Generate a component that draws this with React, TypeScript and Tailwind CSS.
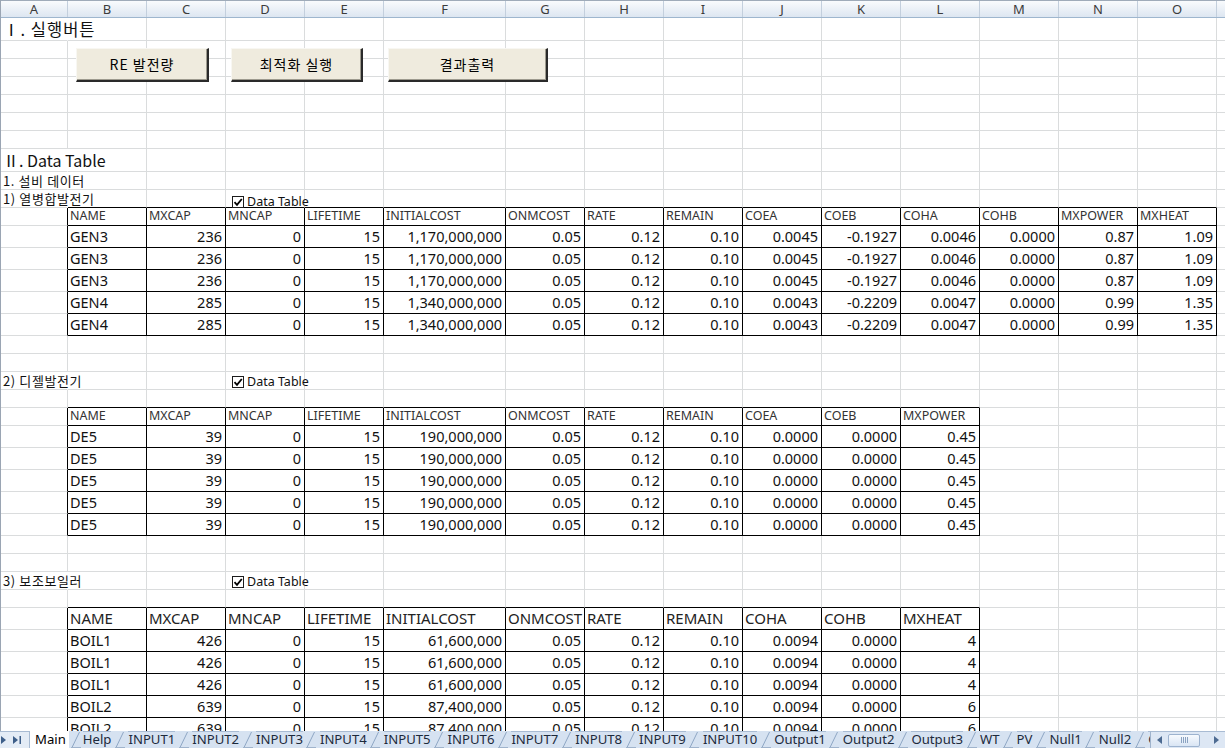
import React from 'react';

type Tbl = { r0: number; r1: number; c0: number; c1: number };
type Kind = 'blank' | 'h1' | 'sub' | 'th' | 'th3' | 'td';
type Row = { h: number; kind: Kind; text?: string; cells?: string[] };

const WIDTHS = [67, 79, 79, 79, 79, 122, 79, 79, 79, 79, 79, 79, 79, 79, 79, 40];
const WCLS: Record<number, string> = { 67: 'w-[67px]', 79: 'w-[79px]', 122: 'w-[122px]', 40: 'w-[40px]' };
const HCLS: Record<number, string> = { 18: 'h-[18px]', 22: 'h-[22px]', 23: 'h-[23px]' };
const LETTERS = 'ABCDEFGHIJKLMNOP'.split('');

const T1H = ['NAME', 'MXCAP', 'MNCAP', 'LIFETIME', 'INITIALCOST', 'ONMCOST', 'RATE', 'REMAIN', 'COEA', 'COEB', 'COHA', 'COHB', 'MXPOWER', 'MXHEAT'];
const gen3 = ['GEN3', '236', '0', '15', '1,170,000,000', '0.05', '0.12', '0.10', '0.0045', '-0.1927', '0.0046', '0.0000', '0.87', '1.09'];
const gen4 = ['GEN4', '285', '0', '15', '1,340,000,000', '0.05', '0.12', '0.10', '0.0043', '-0.2209', '0.0047', '0.0000', '0.99', '1.35'];
const T2H = ['NAME', 'MXCAP', 'MNCAP', 'LIFETIME', 'INITIALCOST', 'ONMCOST', 'RATE', 'REMAIN', 'COEA', 'COEB', 'MXPOWER'];
const de5 = ['DE5', '39', '0', '15', '190,000,000', '0.05', '0.12', '0.10', '0.0000', '0.0000', '0.45'];
const T3H = ['NAME', 'MXCAP', 'MNCAP', 'LIFETIME', 'INITIALCOST', 'ONMCOST', 'RATE', 'REMAIN', 'COHA', 'COHB', 'MXHEAT'];
const boil1 = ['BOIL1', '426', '0', '15', '61,600,000', '0.05', '0.12', '0.10', '0.0094', '0.0000', '4'];
const boil2 = ['BOIL2', '639', '0', '15', '87,400,000', '0.05', '0.12', '0.10', '0.0094', '0.0000', '6'];

const B = (n: number): Row[] => Array.from({ length: n }, () => ({ h: 18, kind: 'blank' as Kind }));

const ROWS: Row[] = [
  { h: 23, kind: 'h1', text: 'Ⅰ. 실행버튼' },
  ...B(6),
  { h: 23, kind: 'h1', text: 'Ⅱ. Data Table' },
  { h: 18, kind: 'sub', text: '1. 설비 데이터' },
  { h: 18, kind: 'sub', text: '1) 열병합발전기' },
  { h: 18, kind: 'th', cells: T1H },
  { h: 22, kind: 'td', cells: gen3 },
  { h: 22, kind: 'td', cells: gen3 },
  { h: 22, kind: 'td', cells: gen3 },
  { h: 22, kind: 'td', cells: gen4 },
  { h: 22, kind: 'td', cells: gen4 },
  ...B(2),
  { h: 18, kind: 'sub', text: '2) 디젤발전기' },
  ...B(1),
  { h: 18, kind: 'th', cells: T2H },
  { h: 22, kind: 'td', cells: de5 },
  { h: 22, kind: 'td', cells: de5 },
  { h: 22, kind: 'td', cells: de5 },
  { h: 22, kind: 'td', cells: de5 },
  { h: 22, kind: 'td', cells: de5 },
  ...B(2),
  { h: 18, kind: 'sub', text: '3) 보조보일러' },
  ...B(1),
  { h: 22, kind: 'th3', cells: T3H },
  { h: 22, kind: 'td', cells: boil1 },
  { h: 22, kind: 'td', cells: boil1 },
  { h: 22, kind: 'td', cells: boil1 },
  { h: 22, kind: 'td', cells: boil2 },
  { h: 22, kind: 'td', cells: boil2 },
];

const TABLES: Tbl[] = [
  { r0: 10, r1: 15, c0: 1, c1: 14 },
  { r0: 20, r1: 25, c0: 1, c1: 11 },
  { r0: 30, r1: 35, c0: 1, c1: 11 },
];

const rightBlack = (r: number, c: number) => TABLES.some((t) => r >= t.r0 && r <= t.r1 && c >= t.c0 - 1 && c <= t.c1);
const bottomBlack = (r: number, c: number) => TABLES.some((t) => c >= t.c0 && c <= t.c1 && r >= t.r0 - 1 && r <= t.r1);

const FONT = "font-['Noto_Sans','Noto_Sans_CJK_KR',sans-serif]";
const KFONT = "font-['Noto_Sans_CJK_KR','Noto_Sans',sans-serif]";

function SheetRow({ row, r }: { row: Row; r: number }) {
  const overflowRow = row.kind === 'h1' || row.kind === 'sub';
  return (
    <div className={`flex ${HCLS[row.h]}`}>
      {WIDTHS.map((w, c) => {
        const rb = rightBlack(r, c);
        const bb = bottomBlack(r, c);
        let rCls = rb ? 'border-r-black' : 'border-r-[#dadcdd]';
        if (!rb && overflowRow && c === 0) rCls = 'border-r-transparent';
        const bCls = bb ? 'border-b-black' : 'border-b-[#dadcdd]';
        let content: React.ReactNode = null;
        let align = 'justify-start';
        if (overflowRow && c === 0) {
          content =
            row.kind === 'h1' ? (
              <span
                className={`whitespace-nowrap pl-[2px] ${r === 0 ? 'text-[16.5px] tracking-[1px]' : 'text-[16px]'} leading-none text-[#111] ${KFONT}`}
              >
                {row.text}
              </span>
            ) : (
              <span className={`whitespace-nowrap pl-[2px] text-[13px] tracking-[0.6px] leading-none text-[#111] ${KFONT}`}>{row.text}</span>
            );
        }
        if (row.cells && c >= 1 && c <= row.cells.length) {
          const txt = row.cells[c - 1];
          if (row.kind === 'th') {
            content = <span className={`whitespace-nowrap pl-[2px] text-[12.5px] leading-none text-[#333] ${FONT}`}>{txt}</span>;
          } else if (row.kind === 'th3') {
            content = <span className={`whitespace-nowrap pl-[2px] text-[15px] leading-none text-[#222] ${FONT}`}>{txt}</span>;
          } else {
            const left = c === 1;
            align = left ? 'justify-start' : 'justify-end';
            content = (
              <span className={`whitespace-nowrap ${left ? 'pl-[2px]' : 'pr-[3px]'} text-[14.5px] leading-none text-[#111] ${FONT}`}>{txt}</span>
            );
          }
        }
        return (
          <div key={c} className={`relative flex shrink-0 items-center ${align} ${WCLS[w]} border-r border-b ${rCls} ${bCls}`}>
            {content}
          </div>
        );
      })}
    </div>
  );
}

function XButton({ label, cls }: { label: string; cls: string }) {
  return (
    <div
      className={`absolute top-[48px] h-[34px] flex items-center justify-center bg-[#efebde] border-t border-l border-t-[#f8f7f2] border-l-[#f8f7f2] border-r-2 border-b-2 border-r-[#2a2a2a] border-b-[#2a2a2a] shadow-[inset_-1px_-1px_0_#9d9a8e] text-[14px] tracking-[1px] text-black ${KFONT} ${cls}`}
    >
      {label}
    </div>
  );
}

function Check({ cls }: { cls: string }) {
  return (
    <div className={`absolute left-[231px] flex items-center gap-[3px] ${cls}`}>
      <div className="w-[12px] h-[12px] bg-white border border-[#1c1c1c] flex items-center justify-center">
        <svg width="10" height="10" viewBox="0 0 10 10">
          <path d="M1.5 5.2 L4 7.8 L8.8 2" fill="none" stroke="#000" strokeWidth="1.8" />
        </svg>
      </div>
      <span className={`text-[12.5px] leading-none text-[#111] ${FONT}`}>Data Table</span>
    </div>
  );
}

const TABS = ['Help', 'INPUT1', 'INPUT2', 'INPUT3', 'INPUT4', 'INPUT5', 'INPUT6', 'INPUT7', 'INPUT8', 'INPUT9', 'INPUT10', 'Output1', 'Output2', 'Output3', 'WT', 'PV', 'Null1', 'Null2', 'Output'];

function Sep({ w }: { w: string }) {
  return (
    <div className={`shrink-0 h-full flex items-center justify-center ${w}`}>
      <svg width="10" height="17" viewBox="0 0 10 17">
        <path d="M1 16.5 L8.5 1" stroke="#8ea6c4" strokeWidth="1" fill="none" />
        <path d="M0 16.5 L10 16.5" stroke="#9fb3cc" strokeWidth="1" fill="none" />
      </svg>
    </div>
  );
}

function TabBar() {
  return (
    <div className={`flex h-[17px] w-[1225px] bg-[#d6e2f1] ${FONT}`}>
      <div className="w-[30px] shrink-0 flex items-center gap-[6px] pl-[1px] bg-[#e4ecf6] border-t border-t-[#a8bbd3] border-r border-r-[#a8bbd3]">
        <svg width="6" height="8" viewBox="0 0 6 8">
          <path d="M0 0 L5 4 L0 8 Z" fill="#3e5f8a" />
        </svg>
        <svg width="9" height="8" viewBox="0 0 9 8">
          <path d="M0 0 L5 4 L0 8 Z" fill="#3e5f8a" />
          <rect x="6.5" y="0" width="1.5" height="8" fill="#3e5f8a" />
        </svg>
      </div>
      <div className="flex-1 flex overflow-hidden">
        <div className="shrink-0 h-full bg-white pl-[5px] pr-[3px] flex items-center text-[13.15px] text-black leading-none">Main</div>
        <Sep w="w-[14px]" />
        {TABS.map((t, i) => (
          <React.Fragment key={i}>
            <div className="shrink-0 h-full flex items-center text-[13.15px] text-[#1d2a3c] leading-none border-t border-t-[#a8bbd3]">{t}</div>
            <Sep w="w-[17px]" />
          </React.Fragment>
        ))}
      </div>
      <div className="w-[75px] shrink-0 flex items-center bg-[#dde7f4] border-t border-t-[#a8bbd3] border-l border-l-[#9fb3cc]">
        <div className="w-[17px] h-full flex items-center justify-center">
          <svg width="5" height="8" viewBox="0 0 5 8">
            <path d="M5 0 L0 4 L5 8 Z" fill="#4d6b92" />
          </svg>
        </div>
        <div className="w-[32px] h-[13px] rounded-[2px] bg-linear-to-b from-[#f7fafe] to-[#d9e5f4] border border-[#9db3cf] flex items-center justify-center gap-[1px]">
          <div className="w-px h-[6px] bg-[#8aa2c1]" />
          <div className="w-px h-[6px] bg-[#8aa2c1]" />
          <div className="w-px h-[6px] bg-[#8aa2c1]" />
          <div className="w-px h-[6px] bg-[#8aa2c1]" />
        </div>
        <div className="flex-1" />
        <div className="w-[17px] h-full flex items-center justify-center">
          <svg width="5" height="8" viewBox="0 0 5 8">
            <path d="M0 0 L5 4 L0 8 Z" fill="#4d6b92" />
          </svg>
        </div>
      </div>
    </div>
  );
}

export default function App() {
  return (
    <div className="w-[1225px] h-[748px] overflow-hidden bg-white flex flex-col">
      <div className="relative h-[731px] overflow-hidden border-l border-l-[#9aa5b3]">
        <div className="flex h-[18px] border-t border-t-[#9fabb9] border-b border-b-[#9eb6ce] bg-linear-to-b from-[#f9fbfd] to-[#dde6f1]">
          {WIDTHS.map((w, c) => (
            <div
              key={c}
              className={`shrink-0 ${WCLS[w]} border-r border-r-[#c3cfdd] flex items-center justify-center text-[13px] leading-none text-[#3c3c3c] ${FONT}`}
            >
              {LETTERS[c]}
            </div>
          ))}
        </div>
        {ROWS.map((row, r) => (
          <SheetRow key={r} row={row} r={r} />
        ))}
        <XButton label="RE 발전량" cls="left-[75px] w-[133px]" />
        <XButton label="최적화 실행" cls="left-[230px] w-[132px]" />
        <XButton label="결과출력" cls="left-[387px] w-[160px]" />
        <Check cls="top-[196px]" />
        <Check cls="top-[376px]" />
        <Check cls="top-[576px]" />
      </div>
      <TabBar />
    </div>
  );
}
